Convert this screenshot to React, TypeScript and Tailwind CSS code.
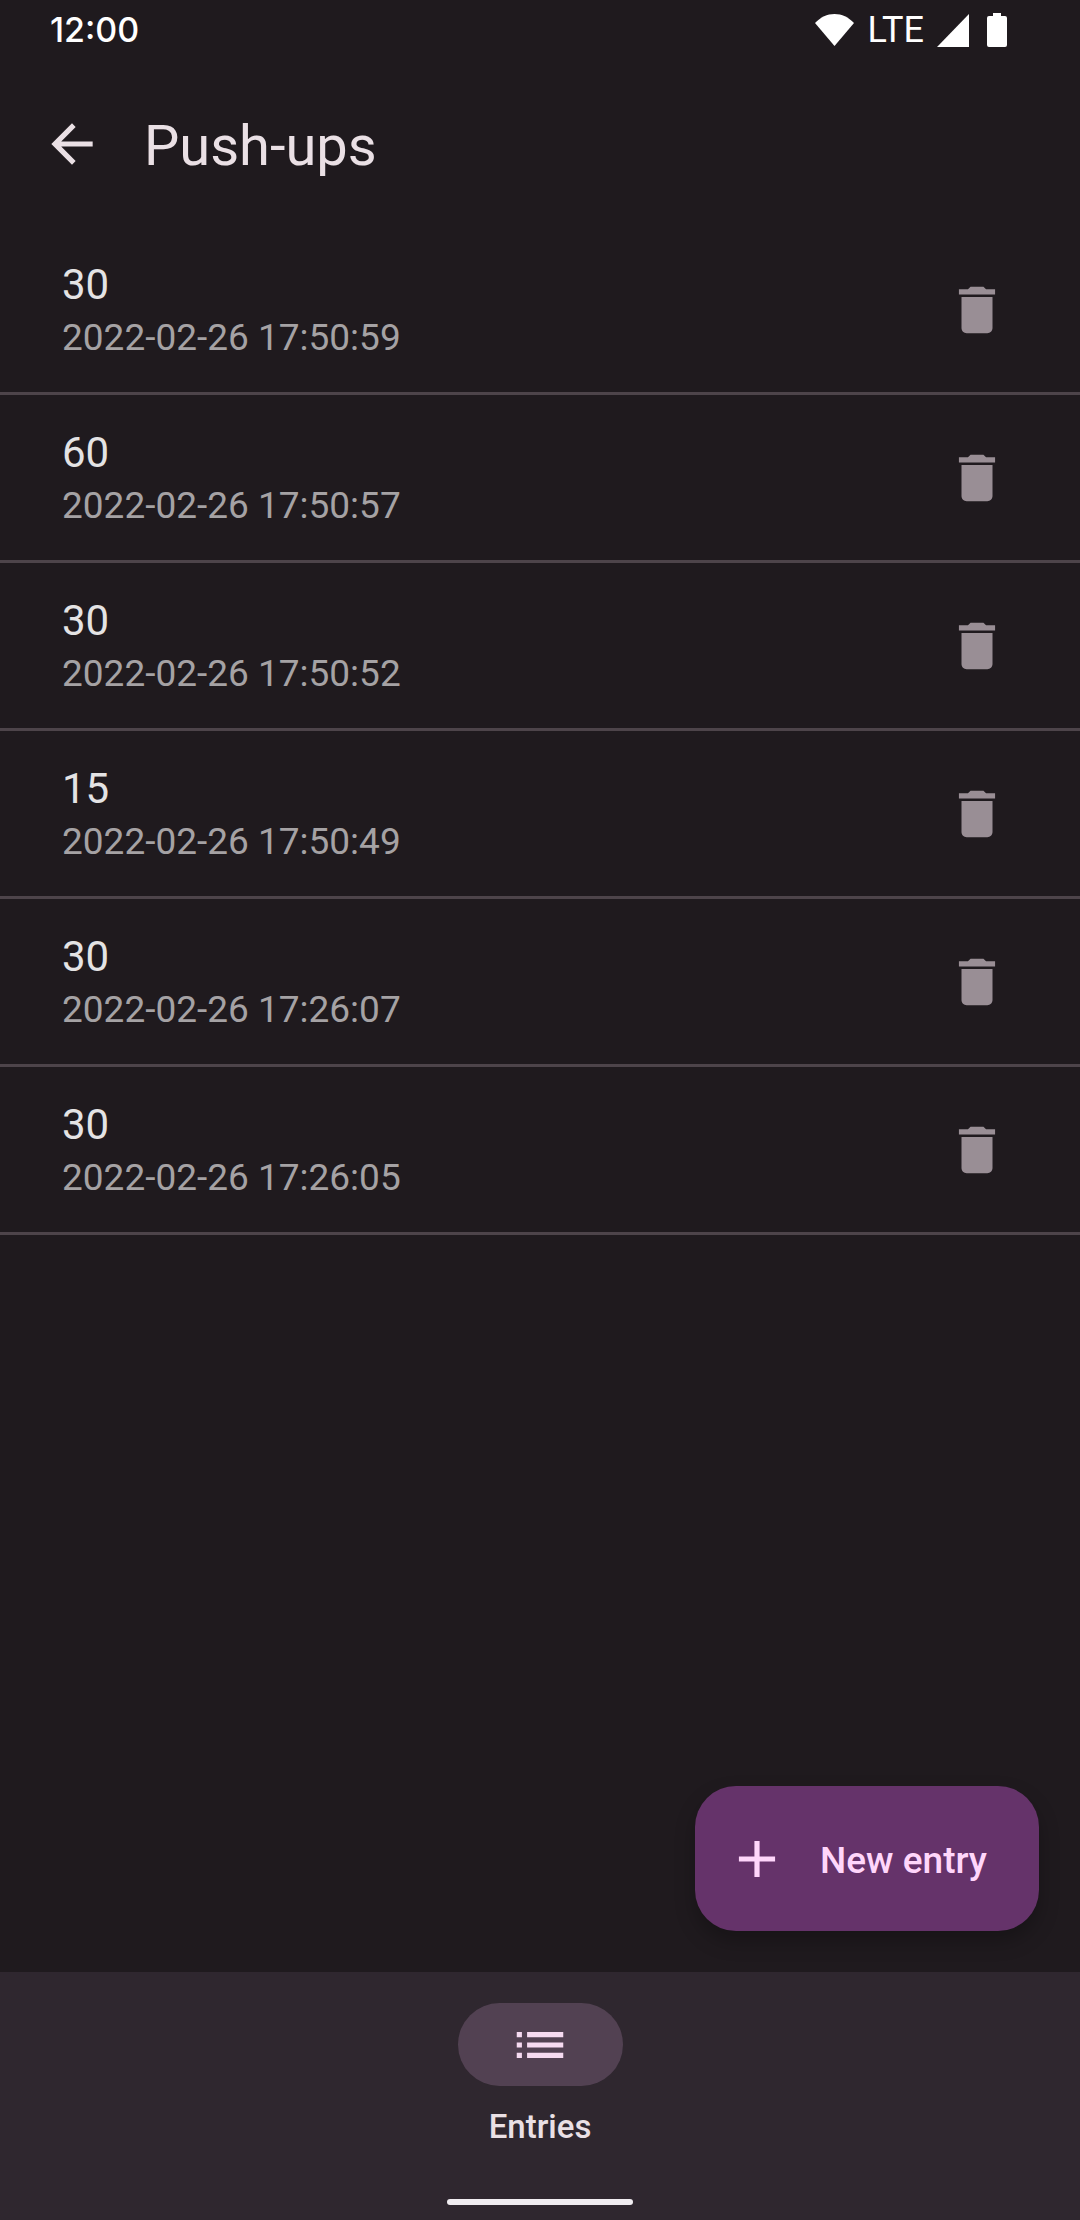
const entries = [
  { count: 30, time: "2022-02-26 17:50:59" },
  { count: 60, time: "2022-02-26 17:50:57" },
  { count: 30, time: "2022-02-26 17:50:52" },
  { count: 15, time: "2022-02-26 17:50:49" },
  { count: 30, time: "2022-02-26 17:26:07" },
  { count: 30, time: "2022-02-26 17:26:05" },
];

function Icon({ path, className }: { path: string; className?: string }) {
  return (
    <svg viewBox="0 0 24 24" fill="currentColor" aria-hidden="true" className={className}>
      <path d={path} />
    </svg>
  );
}

const ARROW_BACK = "M20 11H7.83l5.59-5.59L12 4l-8 8 8 8 1.41-1.41L7.83 13H20v-2z";
const DELETE =
  "M6 19c0 1.1.9 2 2 2h8c1.1 0 2-.9 2-2V7H6v12zM19 4h-3.5l-1-1h-5l-1 1H5v2h14V4z";
const ADD = "M19 13h-6v6h-2v-6H5v-2h6V5h2v6h6v2z";
const LIST = "M3 13h2v-2H3v2zm0 4h2v-2H3v2zm0-8h2V7H3v2zm4 4h14v-2H7v2zm0 4h14v-2H7v2zM7 7v2h14V7H7z";

function StatusBar() {
  return (
    <div className="flex h-[60px] items-center justify-between pr-[73px] pl-[50px] text-white">
      <span className="font-[Inter,sans-serif] text-[34px] leading-[40px] font-medium">12:00</span>
      <div className="flex items-center">
        <svg viewBox="0 0 39 32" className="h-8 w-[39px]" fill="currentColor" aria-label="Wi-Fi">
          <path d="M19.500 32L0 9C5.500 3.200 12.200 0 19.500 0S33.500 3.200 39 9Z" />
        </svg>
        <span className="ml-[14px] text-[36px] leading-[40px]">LTE</span>
        <svg viewBox="0 0 32 33" className="ml-[13px] h-[33px] w-8" fill="currentColor" aria-label="Signal">
          <path d="M32 0V33H0Z" />
        </svg>
        <svg viewBox="0 0 20 34" className="ml-[18px] h-[34px] w-5" fill="currentColor" aria-label="Battery">
          <path d="M6 0h8v3h4a2 2 0 0 1 2 2v27a2 2 0 0 1-2 2H2a2 2 0 0 1-2-2V5a2 2 0 0 1 2-2h4z" />
        </svg>
      </div>
    </div>
  );
}

export default function App() {
  return (
    <div className="flex min-h-screen flex-col bg-[#1f1a1e] font-[Roboto,sans-serif]">
      <StatusBar />
      <header className="flex h-[167px] items-center gap-[41px] px-[41px] text-[#eae0e5]">
        <button type="button" aria-label="Back">
          <Icon path={ARROW_BACK} className="size-[62px]" />
        </button>
        <h1 className="pt-1 text-[56px] leading-[72px]">Push-ups</h1>
      </header>

      <main className="flex flex-1 flex-col">
        <ul>
          {entries.map((entry) => (
            <li
              key={entry.time}
              className="flex h-[168px] items-center justify-between border-b-[3px] border-[#4d444a] pr-[72px] pl-[62px]"
            >
              <div>
                <p className="text-[42px] leading-[56px] text-[#e4e3e4]">{entry.count}</p>
                <p className="text-[37px] leading-[50px] text-[#a5a2a4]">{entry.time}</p>
              </div>
              <button type="button" aria-label={`Delete entry ${entry.time}`} className="text-[#998e95]">
                <Icon path={DELETE} className="size-[62px]" />
              </button>
            </li>
          ))}
        </ul>
        <button
          type="button"
          className="mt-auto mr-[41px] mb-[41px] flex h-[145px] items-center gap-8 self-end rounded-[41px] bg-[#65336a] pr-[52px] pl-[31px] text-[#ffd6fb] shadow-[0_10px_20px_rgba(0,0,0,0.25)]"
        >
          <Icon path={ADD} className="size-[62px]" />
          <span className="pt-1 text-[37px] leading-[50px] font-medium">New entry</span>
        </button>
      </main>

      <nav className="flex h-[248px] flex-col items-center bg-[#2f272f] pt-[31px]">
        <a href="#entries" aria-current="page" className="flex flex-col items-center gap-5">
          <span className="flex h-[83px] w-[165px] items-center justify-center rounded-full bg-[#524152] text-[#f6daf1]">
            <Icon path={LIST} className="size-[62px]" />
          </span>
          <span className="text-[33px] leading-[42px] font-medium text-[#eae0e5]">Entries</span>
        </a>
        <div className="mt-auto mb-[15px] h-[6px] w-[186px] rounded-full bg-[#f0ecf0]" />
      </nav>
    </div>
  );
}
